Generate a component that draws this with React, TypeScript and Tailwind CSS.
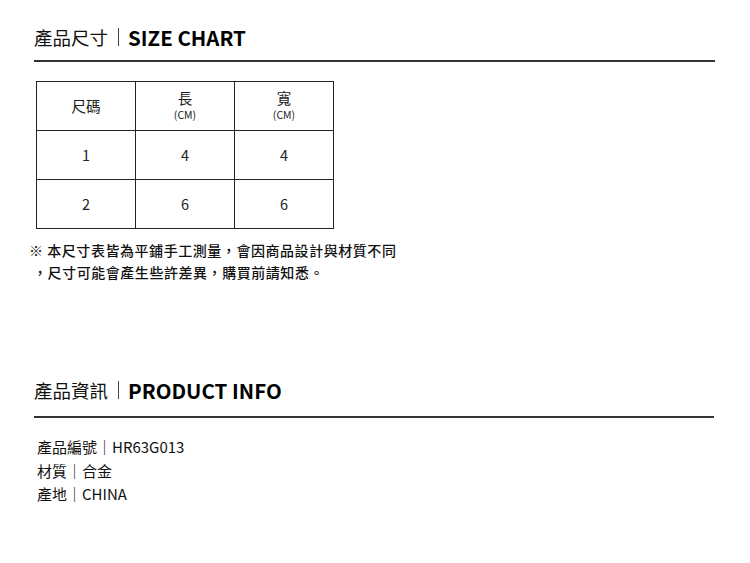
const font = { fontFamily: '"Noto Sans CJK TC", "Noto Sans", sans-serif' }

function Heading({ zh, en }: { zh: string; en: string }) {
  return (
    <div className="flex items-center h-[28px] leading-[28px] text-[#111]">
      <span className="text-[18.5px] font-normal">{zh}</span>
      <span className="ml-[10px] mr-[9px] h-[18px] w-px bg-[#444]" />
      <span className="text-[20.5px] font-bold text-black">{en}</span>
    </div>
  )
}

const rows = [
  ["1", "4", "4"],
  ["2", "6", "6"],
]

export default function App() {
  return (
    <div style={font} className="w-[750px] h-[563px] bg-white px-[34px] pt-[23px] text-[#222]">
      <Heading zh="產品尺寸" en="SIZE CHART" />
      <div className="mt-[9px] h-[2px] w-[681px] bg-[#333]" />

      <table className="mt-[19px] ml-[2px] border-collapse text-[14.5px] text-[#222]">
        <tbody>
          <tr className="h-[49px]">
            <td className="w-[99px] border border-[#222] text-center">尺碼</td>
            <td className="w-[99px] border border-[#222] text-center">
              <div className="leading-[16px] -mt-[2px]">長</div>
              <div className="mt-[2px] text-[10.5px] leading-[13px]">(CM)</div>
            </td>
            <td className="w-[99px] border border-[#222] text-center">
              <div className="leading-[16px] -mt-[2px]">寬</div>
              <div className="mt-[2px] text-[10.5px] leading-[13px]">(CM)</div>
            </td>
          </tr>
          {rows.map((r) => (
            <tr key={r[0]} className="h-[49px]">
              {r.map((c, i) => (
                <td key={i} className="border border-[#222] text-center">{c}</td>
              ))}
            </tr>
          ))}
        </tbody>
      </table>

      <div className="mt-[10px] -ml-[5px] text-[14px] font-medium tracking-[0.55px] leading-[22px] text-[#111]">
        <div>※ 本尺寸表皆為平鋪手工測量，會因商品設計與材質不同</div>
        <div className="pl-[4px]">，尺寸可能會產生些許差異，購買前請知悉。</div>
      </div>

      <div className="mt-[93px]">
        <Heading zh="產品資訊" en="PRODUCT INFO" />
      </div>
      <div className="mt-[12px] h-[2px] w-[680px] bg-[#333]" />

      <div className="mt-[17px] ml-[3px] text-[15px] leading-[23.5px] text-[#111]">
        <div>產品編號｜HR63G013</div>
        <div>材質｜合金</div>
        <div>產地｜CHINA</div>
      </div>
    </div>
  )
}
